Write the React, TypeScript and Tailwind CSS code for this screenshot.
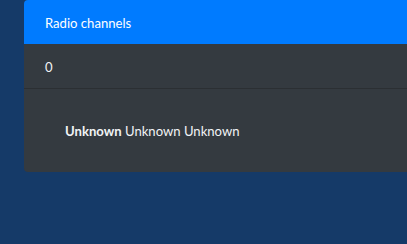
export default function App() {
  return (
    <div className="w-[407px] h-[244px] overflow-hidden bg-[#153a68]" style={{ fontFamily: 'Lato, "Noto Sans", sans-serif' }}>
      <div className="ml-6 w-[400px] rounded-[4px] overflow-hidden bg-[#343a40] text-[13.1px] text-[#f1f3f5]">
        <div className="h-[44px] bg-[#007bff] flex items-center pl-[21px] pt-[3px] text-white">Radio channels</div>
        <div className="h-[45px] border-b border-[#2b2f33] flex items-center pl-[21px] pt-[3px]">0</div>
        <div className="h-[83px] flex items-center pl-[41px] pt-[2px]">
          <span><b className="font-bold">Unknown</b> Unknown Unknown</span>
        </div>
      </div>
    </div>
  );
}
